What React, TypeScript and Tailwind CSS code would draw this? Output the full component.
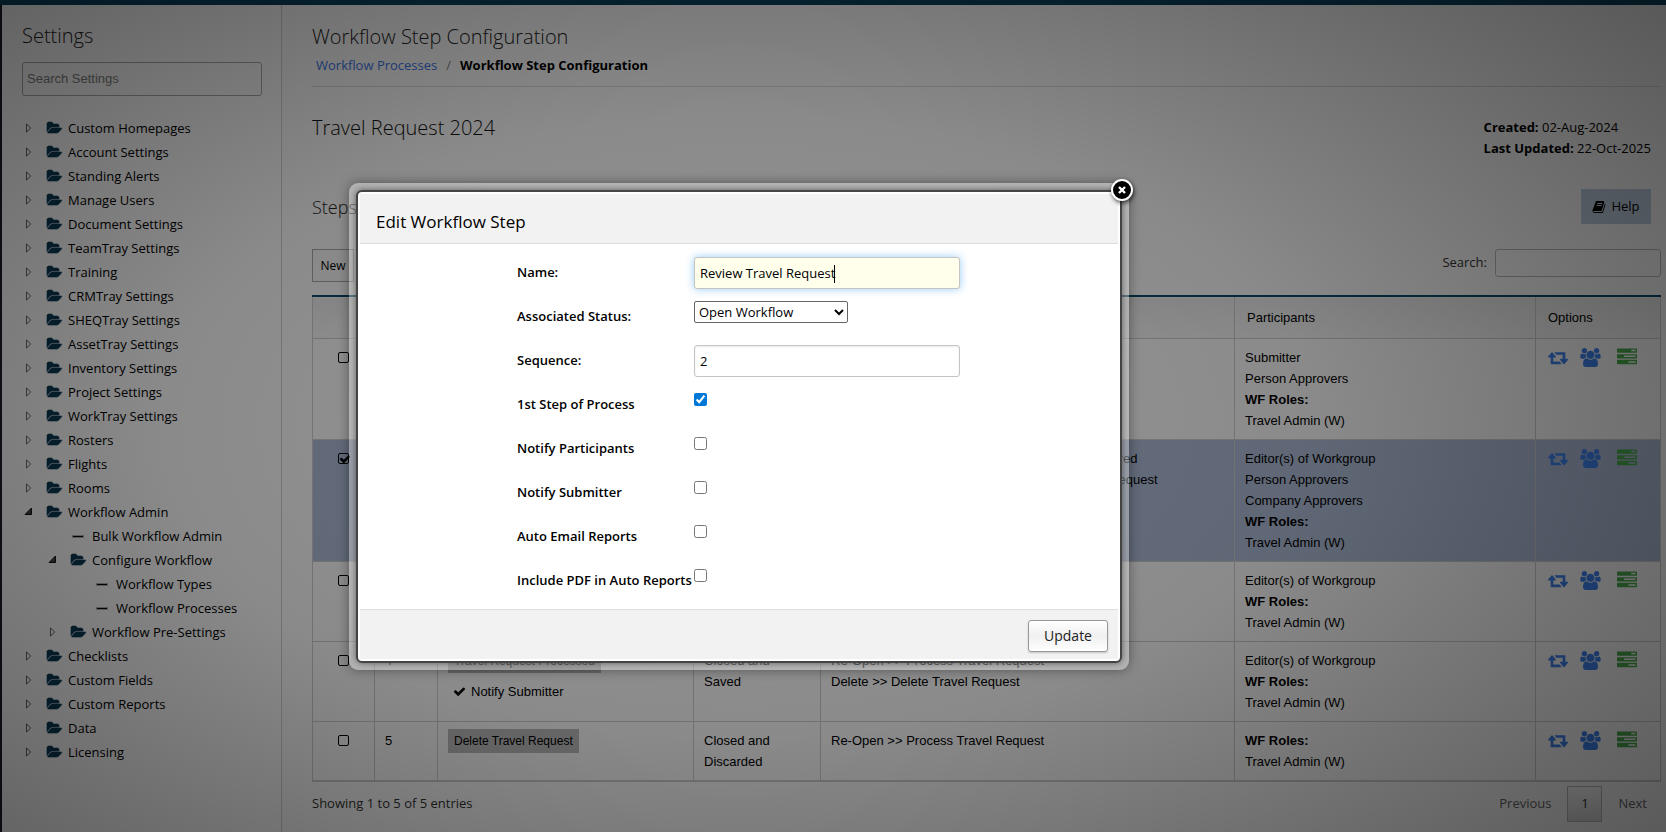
import React, { useState } from 'react';

const icons = {
  retweet: {
    box: '0 0 1920 1792',
    d: 'M1280 1504q0 13-9.5 22.5t-22.5 9.5h-960q-8 0-13.5-2t-9-7-5.5-8-3-11.5-1-11.5v-600h-192q-26 0-45-19t-19-45q0-24 15-41l320-384q19-22 49-22t49 22l320 384q15 17 15 41 0 26-19 45t-45 19h-192v384h576q16 0 25 11l160 192q7 10 7 21zm640-416q0 24-15 41l-320 384q-20 23-49 23t-49-23l-320-384q-15-17-15-41 0-26 19-45t45-19h192v-384h-576q-16 0-25-12l-160-192q-7-9-7-20 0-13 9.5-22.5t22.5-9.5h960q8 0 13.5 2t9 7 5.5 8 3 11.5 1 11.5v600h192q26 0 45 19t19 45z',
  },
  group: {
    box: '0 0 1920 1792',
    d: 'M593 896q-162 5-265 128h-134q-82 0-138-40.5t-56-118.5q0-353 124-353 6 0 43.5 21t97.5 42.5 119 21.5q67 0 133-23-5 37-5 66 0 139 81 256zm1071 637q0 120-73 189.5t-194 69.5h-874q-121 0-194-69.5t-73-189.5q0-53 3.5-103.5t14-109 26.5-108.5 43-97.5 62-81 85.5-53.5 111.5-20q10 0 43 21.5t73 48 107 48 135 21.5 135-21.5 107-48 73-48 43-21.5q61 0 111.5 20t85.5 53.5 62 81 43 97.5 26.5 108.5 14 109 3.5 103.5zm-1024-1277q0 106-75 181t-181 75-181-75-75-181 75-181 181-75 181 75 75 181zm704 384q0 159-112.5 271.5t-271.5 112.5-271.5-112.5-112.5-271.5 112.5-271.5 271.5-112.5 271.5 112.5 112.5 271.5zm576 225q0 78-56 118.5t-138 40.5h-134q-103-123-265-128 81-117 81-256 0-29-5-66 66 23 133 23 59 0 119-21.5t97.5-42.5 43.5-21q124 0 124 353zm-128-609q0 106-75 181t-181 75-181-75-75-181 75-181 181-75 181 75 75 181z',
  },
  tasks: {
    box: '0 0 1792 1792',
    d: 'M1024 1408h640v-128h-640v128zm-384-512h1024v-128h-1024v128zm640-512h384v-128h-384v128zm512 832v256q0 26-19 45t-45 19h-1664q-26 0-45-19t-19-45v-256q0-26 19-45t45-19h1664q26 0 45 19t19 45zm0-512v256q0 26-19 45t-45 19h-1664q-26 0-45-19t-19-45v-256q0-26 19-45t45-19h1664q26 0 45 19t19 45zm0-512v256q0 26-19 45t-45 19h-1664q-26 0-45-19t-19-45v-256q0-26 19-45t45-19h1664q26 0 45 19t19 45z',
  },
  folder: {
    box: '0 0 1920 1792',
    d: 'M1879 952q0 31-31 66l-336 396q-43 51-120.5 86.5t-143.5 35.5h-1088q-34 0-60.5-13t-26.5-43q0-31 31-66l336-396q43-51 120.5-86.5t143.5-35.5h1088q34 0 60.5 13t26.5 43zm-343-344v160h-832q-94 0-197 47.5t-164 119.5l-337 396-5 6q0-4-.5-12.5t-.5-12.5v-960q0-92 66-158t158-66h320q92 0 158 66t66 158v32h544q92 0 158 66t66 158z',
  },
  check: {
    box: '0 0 1792 1792',
    d: 'M1671 566q0 40-28 68l-724 724-136 136q-28 28-68 28t-68-28l-136-136-362-362q-28-28-28-68t28-68l136-136q28-28 68-28t68 28l294 295 656-657q28-28 68-28t68 28l136 136q28 28 28 68z',
  },
  book: {
    box: '0 0 1792 1792',
    d: 'M1703 478q40 57 18 129l-275 906q-19 64-76.5 107.5t-122.5 43.5h-923q-77 0-148.5-53.5t-99.5-131.5q-24-67-2-127 0-4 3-27t4-37q1-8-3-21.5t-3-19.5q2-11 8-21t16.5-23.5 16.5-23.5q23-38 45-91.5t30-91.5q3-10 .5-30t-.5-28q3-11 17-28t17-23q21-36 42-92t25-90q1-9-2.5-32t.5-28q4-13 22-30.5t22-22.5q19-26 42.5-84.5t27.5-96.5q1-8-3-25.5t-2-26.5q2-8 9-18t18-23 17-21q8-12 16.5-30.5t15-35 16-36 19.5-32 26.5-23.5 36-11.5 47.5 5.5l-1 3q38-9 51-9h761q74 0 114 56t18 130l-274 906q-36 119-71.5 153.5t-128.5 34.5h-869q-27 0-38 15-11 16-1 43 24 70 144 70h923q29 0 56-15.5t35-41.5l300-987q7-22 5-57 38 15 59 43zm-1064 2q-4 13 2 22.5t20 9.5h608q13 0 25.5-9.5t16.5-22.5l21-64q4-13-2-22.5t-20-9.5h-608q-13 0-25.5 9.5t-16.5 22.5zm-83 256q-4 13 2 22.5t20 9.5h608q13 0 25.5-9.5t16.5-22.5l21-64q4-13-2-22.5t-20-9.5h-608q-13 0-25.5 9.5t-16.5 22.5z',
  },
};

const Icon = ({ name, className }: { name: keyof typeof icons; className: string }) => (
  <svg viewBox={icons[name].box} fill="currentColor" className={className} aria-hidden="true">
    <path d={icons[name].d} />
  </svg>
);

type TreeNode = { label: string; kind?: 'open' | 'leaf'; children?: TreeNode[] };

const tree: TreeNode[] = [
  { label: 'Custom Homepages' },
  { label: 'Account Settings' },
  { label: 'Standing Alerts' },
  { label: 'Manage Users' },
  { label: 'Document Settings' },
  { label: 'TeamTray Settings' },
  { label: 'Training' },
  { label: 'CRMTray Settings' },
  { label: 'SHEQTray Settings' },
  { label: 'AssetTray Settings' },
  { label: 'Inventory Settings' },
  { label: 'Project Settings' },
  { label: 'WorkTray Settings' },
  { label: 'Rosters' },
  { label: 'Flights' },
  { label: 'Rooms' },
  {
    label: 'Workflow Admin',
    kind: 'open',
    children: [
      { label: 'Bulk Workflow Admin', kind: 'leaf' },
      {
        label: 'Configure Workflow',
        kind: 'open',
        children: [
          { label: 'Workflow Types', kind: 'leaf' },
          { label: 'Workflow Processes', kind: 'leaf' },
        ],
      },
      { label: 'Workflow Pre-Settings' },
    ],
  },
  { label: 'Checklists' },
  { label: 'Custom Fields' },
  { label: 'Custom Reports' },
  { label: 'Data' },
  { label: 'Licensing' },
];

const Tree = ({ nodes }: { nodes: TreeNode[] }) => (
  <ul>
    {nodes.map((node) => (
      <li key={node.label}>
        <a href="#" className="flex h-6 items-center text-[13px] leading-6 text-black">
          {node.kind === 'leaf' ? (
            <span className="mr-2 ml-[26px] flex w-3 justify-center">
              <span className="h-px w-[10px] bg-black outline-1 outline-black/30"></span>
            </span>
          ) : (
            <>
              <svg viewBox="0 0 8 10" className="mr-[15px] ml-[2px] h-[10px] w-2" aria-hidden="true">
                {node.kind === 'open' ? (
                  <path d="M7.500 1V7.500H1z" fill="#444" stroke="#111" />
                ) : (
                  <path d="M2.500 1L6.800 5L2.500 9z" fill="none" stroke="#666" />
                )}
              </svg>
              <Icon
                name="folder"
                className="mr-[6px] h-[14px] w-[15px] overflow-visible stroke-current text-[#0a3a54] [stroke-width:80]"
              />
            </>
          )}
          {node.label}
        </a>
        {node.children && (
          <div className="pl-6">
            <Tree nodes={node.children} />
          </div>
        )}
      </li>
    ))}
  </ul>
);

type Step = {
  seq?: number;
  name?: string;
  notify?: boolean;
  status?: string[];
  next?: string[];
  people: string[];
  selected?: boolean;
};

const steps: Step[] = [
  {
    people: ['Submitter', 'Person Approvers'],
  },
  {
    next: [
      'Request Information >> Further Information Required',
      'Additional Information Added >> Process Travel Request',
    ],
    people: ['Editor(s) of Workgroup', 'Person Approvers', 'Company Approvers'],
    selected: true,
  },
  {
    people: ['Editor(s) of Workgroup'],
  },
  {
    seq: 4,
    name: 'Travel Request Processed',
    notify: true,
    status: ['Closed and', 'Saved'],
    next: ['Re-Open >> Process Travel Request', 'Delete >> Delete Travel Request'],
    people: ['Editor(s) of Workgroup'],
  },
  {
    seq: 5,
    name: 'Delete Travel Request',
    status: ['Closed and', 'Discarded'],
    next: ['Re-Open >> Process Travel Request'],
    people: [],
  },
];

const headers = ['', '', '', '', '', 'Participants', 'Options'];

const StepsTable = () => (
  <table className="mt-[13px] w-full table-fixed border-collapse border-x border-b-2 border-[#d0d0d0] font-['Liberation_Sans',Arial,sans-serif] text-[13px] leading-[21px] text-black">
    <colgroup>
      <col className="w-[62px]" />
      <col className="w-[63px]" />
      <col className="w-[256px]" />
      <col className="w-[127px]" />
      <col />
      <col className="w-[301px]" />
      <col className="w-[125px]" />
    </colgroup>
    <thead>
      <tr className="border-t-2 border-t-[#0b4a6b] bg-linear-to-b from-[#f0f0f0] to-[#fafafa]">
        {headers.map((h, i) => (
          <th key={i} scope="col" className="border-x border-b border-[#d0d0d0] px-3 py-[10px] text-left font-normal">
            {h}
          </th>
        ))}
      </tr>
    </thead>
    <tbody>
      {steps.map((step, i) => (
        <tr key={i} className={step.selected ? 'bg-[#b0bed9] align-top' : 'align-top'}>
          <td className="border border-[#d0d0d0] py-2 text-center">
            <label className="relative inline-flex h-[21px] items-center">
              <input
                type="checkbox"
                aria-label={`Select step ${i + 1}`}
                defaultChecked={step.selected}
                className="h-[11px] w-[11px] appearance-none rounded-[2px] border border-black"
              />
              {step.selected && <Icon name="check" className="pointer-events-none absolute left-px h-3 w-3" />}
            </label>
          </td>
          <td className="border border-[#d0d0d0] px-[10px] py-2">{step.seq}</td>
          <td className="border border-[#d0d0d0] px-[10px] py-[7px]">
            {step.name && (
              <div className="w-fit bg-[#bdbdbd] px-[6px] text-[12px] leading-6">{step.name}</div>
            )}
            {step.notify && (
              <div className="mt-2 flex items-center gap-[5px] pl-[5px]">
                <Icon name="check" className="h-[13px] w-[13px]" />
                Notify Submitter
              </div>
            )}
          </td>
          <td className="border border-[#d0d0d0] px-[10px] py-2">
            {step.status?.map((line) => (
              <div key={line}>{line}</div>
            ))}
          </td>
          <td className="border border-[#d0d0d0] px-[10px] py-2">
            {step.next?.map((line) => (
              <div key={line}>{line}</div>
            ))}
          </td>
          <td className="border border-[#d0d0d0] px-[10px] py-2">
            {step.people.map((line) => (
              <div key={line}>{line}</div>
            ))}
            <div className="font-bold">WF Roles:</div>
            <div>Travel Admin (W)</div>
          </td>
          <td className="border border-[#d0d0d0] px-3 py-2">
            <div className="flex items-center">
              <a href="#" aria-label="Transitions" className="mr-3 text-[#3f84f2]">
                <Icon name="retweet" className="h-[19px] w-[20px]" />
              </a>
              <a href="#" aria-label="Participants" className="mr-4 text-[#3f84f2]">
                <Icon name="group" className="h-[19px] w-[21px]" />
              </a>
              <a href="#" aria-label="Tasks" className="text-[#4caf50]">
                <Icon name="tasks" className="h-5 w-5" />
              </a>
            </div>
          </td>
        </tr>
      ))}
    </tbody>
  </table>
);

const flags = [
  { label: '1st Step of Process', checked: true },
  { label: 'Notify Participants', checked: false },
  { label: 'Notify Submitter', checked: false },
  { label: 'Auto Email Reports', checked: false },
  { label: 'Include PDF in Auto Reports', checked: false },
];

const FormRow = ({ id, label, children }: { id: string; label: string; children: React.ReactNode }) => (
  <div className="flex h-11 items-start">
    <label htmlFor={id} className="w-[177px] shrink-0 pt-[5px] leading-5 font-semibold whitespace-nowrap">
      {label}
    </label>
    {children}
  </div>
);

const EditStepDialog = ({ onClose }: { onClose: () => void }) => {
  const [name, setName] = useState('Review Travel Request');

  return (
    <div
      role="dialog"
      aria-labelledby="dialog-title"
      className="absolute top-[183px] left-[349px] w-[780px] rounded-[9px] bg-white/35 p-[7px] shadow-[0_0_12px_rgba(0,0,0,0.4)]"
    >
      <div className="rounded-[6px] border-2 border-[#444] bg-white p-[2px] text-[13px] text-black shadow-[0_0_6px_rgba(0,0,0,0.5)]">
        <h2 id="dialog-title" className="border-b border-[#ddd] bg-[#f2f2f2] px-4 pt-4 pb-[9px] text-[17px] leading-6">
          Edit Workflow Step
        </h2>
        <form className="pt-[13px] pl-[157px]" onSubmit={(e) => e.preventDefault()}>
          <FormRow id="name" label="Name:">
            <div className="relative">
              <input
                id="name"
                type="text"
                value={name}
                onChange={(e) => setName(e.target.value)}
                className="h-8 w-[266px] rounded-[3px] border border-[#c4c4c4] bg-[#ffffec] px-[5px] shadow-[0_0_8px_rgba(82,168,236,0.6)] outline-none"
              />
              <span className="absolute top-2 left-[140px] h-[18px] w-px bg-black"></span>
            </div>
          </FormRow>
          <FormRow id="status" label="Associated Status:">
            <select id="status" className="h-[22px] w-[154px] rounded-[2px] border border-[#666] bg-white">
              <option>Open Workflow</option>
            </select>
          </FormRow>
          <FormRow id="sequence" label="Sequence:">
            <input
              id="sequence"
              type="text"
              defaultValue="2"
              className="h-8 w-[266px] rounded-[3px] border border-[#c4c4c4] bg-white px-[5px] shadow-[inset_0_1px_2px_rgba(0,0,0,0.08)]"
            />
          </FormRow>
          {flags.map((flag, i) => (
            <FormRow key={flag.label} id={`flag-${i}`} label={flag.label}>
              <input
                id={`flag-${i}`}
                type="checkbox"
                defaultChecked={flag.checked}
                className="mt-1 h-[13px] w-[13px] accent-[#0078d7]"
              />
            </FormRow>
          ))}
        </form>
        <div className="flex justify-end border-t border-[#ddd] bg-[#f2f2f2] px-[10px] pt-[10px] pb-[7px]">
          <button
            type="button"
            className="h-8 w-20 rounded-[3px] border border-[#999] bg-linear-to-b from-white via-[#f0f0f0] to-white pb-[2px] text-[14px] text-[#222] shadow-[0_1px_2px_rgba(0,0,0,0.2)]"
          >
            Update
          </button>
        </div>
      </div>
      <button
        type="button"
        aria-label="Close"
        onClick={onClose}
        className="absolute -top-1 -right-1 flex h-[22px] w-[22px] items-center justify-center rounded-full border-2 border-white bg-black shadow-[1px_2px_4px_rgba(0,0,0,0.7)]"
      >
        <svg viewBox="0 0 8 8" className="h-2 w-2" aria-hidden="true">
          <path d="M1 1L7 7M7 1L1 7" stroke="white" strokeWidth="2.400" />
        </svg>
      </button>
    </div>
  );
};

export default function App() {
  const [open, setOpen] = useState(true);

  return (
    <div className="relative flex min-h-screen flex-col bg-white font-['Open_Sans',sans-serif] text-[13px] text-black">
      <div className="h-[5px] bg-[#0b4360]"></div>

      <div className="flex flex-1 border-l-2 border-[#1c1c2a]">
        {/* Settings navigation */}
        <aside className="w-[280px] shrink-0 border-r border-[#d4d4d4] pt-4">
          <h2 className="pl-5 text-[20px] leading-[30px] font-light text-[#222]">Settings</h2>
          <div className="mt-[11px] px-5 pr-[19px]">
            <input
              type="text"
              aria-label="Search Settings"
              placeholder="Search Settings"
              className="h-[34px] w-full rounded-[3px] border border-[#aaa] px-1 pb-[2px] font-['Liberation_Sans',Arial,sans-serif] placeholder:text-[#808080]"
            />
          </div>
          <nav className="mt-5 pl-5">
            <Tree nodes={tree} />
          </nav>
        </aside>

        {/* Workflow step listing */}
        <main className="min-w-0 flex-1 pt-4 pr-[5px] pl-[30px]">
          <h1 className="text-[20px] leading-8 font-light text-[#222]">Workflow Step Configuration</h1>
          <nav className="flex gap-[9px] border-b border-[#ddd] pt-[2px] pb-[11px] pl-1 leading-5">
            <a href="#" className="text-[#3b76e8]">
              Workflow Processes
            </a>
            <span className="text-[#888]">/</span>
            <strong>Workflow Step Configuration</strong>
          </nav>

          <div className="flex items-start justify-between pt-[30px] pr-[10px]">
            <h2 className="text-[20px] leading-[21px] font-light text-[#111]">Travel Request 2024</h2>
            <div className="leading-[21px]">
              <div>
                <strong>Created:</strong> 02-Aug-2024
              </div>
              <div>
                <strong>Last Updated:</strong> 22-Oct-2025
              </div>
            </div>
          </div>

          <div className="flex items-center justify-between pt-[30px] pr-[10px]">
            <h3 className="text-[18px] leading-6 font-light text-[#222]">Steps</h3>
            <button type="button" className="flex h-[35px] w-[70px] items-center justify-center gap-[5px] bg-[#bfd0e0]">
              <Icon name="book" className="h-[14px] w-[14px]" />
              Help
            </button>
          </div>

          <div className="flex items-start justify-between pt-[25px]">
            <button type="button" className="h-[33px] w-[42px] border border-[#aaa] bg-[#fafafa] text-[12px]">
              New
            </button>
            <label className="flex items-center gap-2 text-[#333]">
              Search:
              <input type="search" className="h-7 w-[166px] rounded-[3px] border border-[#bbb] px-[5px]" />
            </label>
          </div>

          <StepsTable />

          <div className="flex items-center justify-between pt-1 pb-3 text-[#333]">
            <span>Showing 1 to 5 of 5 entries</span>
            <div className="flex items-center pr-[14px]">
              <button type="button" className="mr-4 text-[#666]">
                Previous
              </button>
              <button type="button" className="mr-4 h-9 w-[35px] border border-[#bbb] bg-linear-to-b from-white to-[#dcdcdc]">
                1
              </button>
              <button type="button" className="text-[#666]">
                Next
              </button>
            </div>
          </div>
        </main>
      </div>

      {open && (
        <>
          <div className="absolute inset-0 bg-[radial-gradient(ellipse_1150px_620px_at_740px_427px,rgba(0,0,0,0.4)_0%,rgba(0,0,0,0.46)_50%,rgba(0,0,0,0.6)_90%,rgba(0,0,0,0.7)_120%)]"></div>
          <EditStepDialog onClose={() => setOpen(false)} />
        </>
      )}
    </div>
  );
}
